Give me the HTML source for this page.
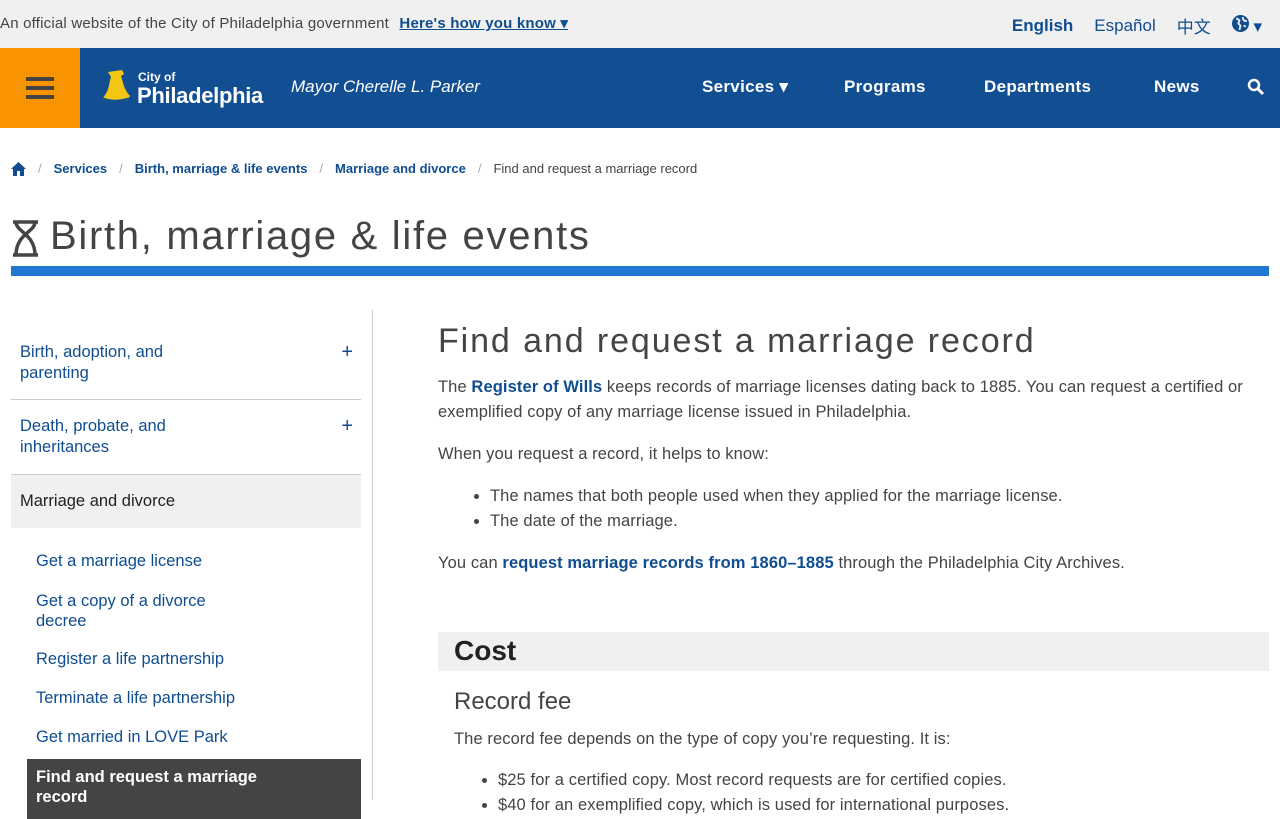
<!DOCTYPE html>
<html><head><meta charset="utf-8">
<style>
*{box-sizing:border-box;margin:0;padding:0}
html,body{width:1280px;height:800px;overflow:hidden}
body{background:#fff;font-family:"Liberation Sans",sans-serif;color:#333}
a{color:#0f4d90}
.top{height:48px;background:#f0f0f0;position:relative;font-size:15px;color:#444}
.top .l{position:absolute;left:0;top:14px;letter-spacing:.2px}
.top .l b{color:#0f4d90;text-decoration:underline;margin-left:6px}
.top .r{position:absolute;right:18px;top:13px;font-size:17px;color:#0f4d90;display:flex;gap:21px;align-items:center}
.hdr{height:80px;background:#124e92;position:relative;color:#fff}
.burger{position:absolute;left:0;top:0;width:80px;height:80px;background:#f99300}
.burger i{position:absolute;left:26px;width:28px;height:4px;background:#444}
.nav{position:absolute;top:29px;font-weight:bold;font-size:17px;letter-spacing:.3px}
.crumb{position:absolute;top:161px;left:11px;font-size:13px;color:#444;display:flex;gap:12px;align-items:center}
.crumb a{font-weight:bold}
.crumb s{text-decoration:none;color:#aaa}
h1{position:absolute;left:50px;top:214px;font-size:40px;font-weight:normal;color:#444;letter-spacing:1.7px}
.bar{position:absolute;left:11px;top:266px;width:1258px;height:10px;background:#2176d2}
.side{position:absolute;left:11px;top:310px;width:350px}
.vl{position:absolute;left:372px;top:310px;width:1px;height:490px;background:#ccc}
.it{font-size:16.5px;color:#0f4d90;padding:0 9px;position:relative;line-height:21px}
.it .p{position:absolute;right:8px;top:0;font-size:20px}
.sub{font-size:16.5px;color:#0f4d90;position:absolute;left:25px}
.main{position:absolute;left:438px;top:0;width:832px}
.main p,.main li{font-size:16.5px;color:#444;line-height:25px;letter-spacing:.1px}
</style></head><body>
<div class="top"><div class="l">An official website of the City of Philadelphia government <b>Here's how you know ▾</b></div>
<div class="r"><b>English</b><span>Español</span><span style="font-family:'Noto Sans CJK SC',sans-serif">中文</span><span>
<svg width="17" height="17" viewBox="0 0 16 16"><circle cx="8" cy="8" r="8" fill="#0f4d90"/><path d="M4 3l3 2-1 3 2 2-1 4M10 2l1 3 3 1M11 10l2 1" stroke="#f0f0f0" stroke-width="1.8" fill="none"/></svg> ▾</span></div></div>
<div class="hdr"><div class="burger"><i style="top:29px"></i><i style="top:38px"></i><i style="top:47px"></i></div>
<svg style="position:absolute;left:100px;top:20px" width="34" height="40" viewBox="0 0 34 40"><path d="M8 4l14-2 2 4-3 2c2 6 3 14 9 20l-2 4c-8 2-18 2-26-1l3-4c4-5 4-12 6-18z" fill="#f3c613"/><path d="M2 30c10 4 20 3 28 0" stroke="#124e92" stroke-width="2" fill="none"/></svg>
<div style="position:absolute;left:138px;top:22px;font-size:12px;font-weight:bold">City of</div>
<div style="position:absolute;left:137px;top:35px;font-size:22px;font-weight:bold;letter-spacing:-.3px">Philadelphia</div>
<div style="position:absolute;left:291px;top:29px;font-size:17px;font-style:italic">Mayor Cherelle L. Parker</div>
<div class="nav" style="left:702px">Services ▾</div><div class="nav" style="left:844px">Programs</div><div class="nav" style="left:984px">Departments</div><div class="nav" style="left:1154px">News</div>
<svg style="position:absolute;left:1247px;top:30px" width="18" height="18" viewBox="0 0 18 18"><circle cx="7" cy="7" r="5" stroke="#fff" stroke-width="2.5" fill="none"/><path d="M11 11l5 5" stroke="#fff" stroke-width="3"/></svg></div>
<div class="crumb"><svg width="15" height="14" viewBox="0 0 15 14"><path d="M7.5 0L0 7h2v7h4V9h3v5h4V7h2z" fill="#0f4d90"/></svg><s>/</s><a>Services</a><s>/</s><a>Birth, marriage &amp; life events</a><s>/</s><a>Marriage and divorce</a><s>/</s><span>Find and request a marriage record</span></div>
<svg style="position:absolute;left:11px;top:220px" width="29" height="37" viewBox="0 0 29 37"><path d="M2 2h25M2 35h25M5 2c0 10 19 12 19 33M24 2c0 10-19 12-19 33" stroke="#444" stroke-width="3.5" fill="none"/></svg>
<h1>Birth, marriage &amp; life events</h1>
<div class="bar"></div>
<div class="vl"></div>
<div class="side">
<div class="it" style="top:32px">Birth, adoption, and<br>parenting<span class="p">+</span></div>
<div style="position:absolute;top:89px;left:0;width:350px;height:1px;background:#ccc"></div>
<div class="it" style="position:absolute;top:106px;width:350px">Death, probate, and<br>inheritances<span class="p">+</span></div>
<div style="position:absolute;top:164px;left:0;width:350px;height:54px;background:#f0f0f0;border-top:1px solid #ccc;font-size:16.5px;color:#222;padding:17px 9px">Marriage and divorce</div>
<div class="sub" style="top:242px">Get a marriage license</div>
<div class="sub" style="top:281px;line-height:20px">Get a copy of a divorce<br>decree</div>
<div class="sub" style="top:340px">Register a life partnership</div>
<div class="sub" style="top:379px">Terminate a life partnership</div>
<div class="sub" style="top:418px">Get married in LOVE Park</div>
<div style="position:absolute;left:16px;top:449px;width:334px;height:60px;background:#444;color:#fff;font-weight:bold;font-size:16.5px;padding:8px 9px;line-height:20px">Find and request a marriage<br>record</div>
</div>
<div class="main">
<div style="position:absolute;top:322px;font-size:34px;color:#444;letter-spacing:1.9px;white-space:nowrap">Find and request a marriage record</div>
<p style="position:absolute;top:375px;width:820px">The <a style="font-weight:bold">Register of Wills</a> keeps records of marriage licenses dating back to 1885. You can request a certified or exemplified copy of any marriage license issued in Philadelphia.</p>
<p style="position:absolute;top:442px">When you request a record, it helps to know:</p>
<ul style="position:absolute;top:484px;left:52px;width:700px"><li>The names that both people used when they applied for the marriage license.</li><li>The date of the marriage.</li></ul>
<p style="position:absolute;top:551px;white-space:nowrap">You can <a style="font-weight:bold">request marriage records from 1860–1885</a> through the Philadelphia City Archives.</p>
<div style="position:absolute;top:632px;width:831px;height:39px;background:#f0f0f0;font-size:28px;font-weight:bold;color:#222;padding:3px 16px">Cost</div>
<div style="position:absolute;top:688px;left:16px;font-size:24px;color:#444">Record fee</div>
<p style="position:absolute;top:727px;left:16px;white-space:nowrap">The record fee depends on the type of copy you’re requesting. It is:</p>
<ul style="position:absolute;top:768px;left:60px;width:700px"><li>$25 for a certified copy. Most record requests are for certified copies.</li><li>$40 for an exemplified copy, which is used for international purposes.</li></ul>
</div>
</body></html>
